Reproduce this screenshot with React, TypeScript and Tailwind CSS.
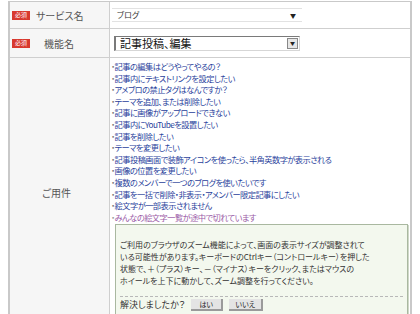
import React from "react";

const links = [
  "記事の編集はどうやってやるの？",
  "記事内にテキストリンクを設定したい",
  "アメブロの禁止タグはなんですか？",
  "テーマを追加、または削除したい",
  "記事に画像がアップロードできない",
  "記事内にYouTubeを設置したい",
  "記事を削除したい",
  "テーマを変更したい",
  "記事投稿画面で装飾アイコンを使ったら、半角英数字が表示される",
  "画像の位置を変更したい",
  "複数のメンバーで一つのブログを使いたいです",
  "記事を一括で削除・非表示・アメンバー限定記事にしたい",
  "絵文字が一部表示されません",
];

function Badge() {
  return (
    <span className="inline-flex h-[9px] w-[18px] items-center justify-center bg-[#d8382e] text-[6px] leading-none text-white">
      必須
    </span>
  );
}

export default function App() {
  const font = { fontFamily: '"Noto Sans CJK JP", "Noto Sans", sans-serif', fontFeatureSettings: '"palt"' } as React.CSSProperties;
  return (
    <div className="h-[314px] w-[420px] overflow-hidden bg-white pl-[8px] pt-[1px]" style={font}>
      <div className="grid w-[404px] grid-cols-[100px_1fr] border-x-2 border-t border-[#c9c9c9]">
        {/* row 1 */}
        <div className="flex h-[27px] items-center gap-[6px] border-b border-r border-[#cfcfcf] bg-[#f6f6f6] pl-[2px] text-[10px] text-[#555]">
          <Badge />
          <span>サービス名</span>
        </div>
        <div className="flex h-[27px] items-center border-b border-[#cfcfcf] pl-[2px]">
          <div className="flex h-[14px] w-[190px] items-center justify-between border-y border-[#e2e2e2] pl-[5px] pr-[6px]">
            <span className="text-[8px] text-[#333]">ブログ</span>
            <span className="text-[6px] text-[#222]">▼</span>
          </div>
        </div>
        {/* row 2 */}
        <div className="flex h-[29px] items-center border-b border-r border-[#cfcfcf] bg-[#f6f6f6] pl-[2px] text-[10px] text-[#555]">
          <Badge />
          <span className="ml-[14px]">機能名</span>
        </div>
        <div className="flex h-[29px] items-center border-b border-[#cfcfcf] pl-[4px]">
          <div className="flex h-[15px] w-[186px] items-center justify-between border-l-2 border-t border-[#7a7a7a] border-b-[#d6d6d6] border-r-[#d6d6d6] border-b border-r pl-[4px] pr-[1px]">
            <span className="text-[11px] leading-none text-[#111]">記事投稿、編集</span>
            <span className="flex h-[11px] w-[11px] items-center justify-center border border-[#888] bg-[#e6e6e6] text-[5px] text-[#222]">▼</span>
          </div>
        </div>
        {/* row 3 */}
        <div className="flex items-center justify-center border-r border-[#cfcfcf] bg-[#f6f6f6] pr-[6px] text-[10px] text-[#555]">
          ご用件
        </div>
        <div className="flex flex-col pb-[8px] pl-[1px] pr-[1px] pt-[3px]">
          <ul className="text-[8.2px] leading-[11.6px] tracking-[-0.5px] text-[#2a3f9c]">
            {links.map((l) => (
              <li key={l} className="whitespace-nowrap">
                <span className="text-[#777]">・</span>
                {l}
              </li>
            ))}
            <li className="whitespace-nowrap text-[#9a5aa6]">
              <span className="text-[#999]">・</span>
              みんなの絵文字一覧が途中で切れています
            </li>
          </ul>
          <div className="ml-[4px] mr-[1px] mt-[1px] border border-[#a9b8a0] bg-[#f3f8ee] pb-[6px] pl-[4px] pr-[4px] pt-[14px] shadow-[1px_1px_0_#cfd8c8]">
            <p className="text-[8px] leading-[12px] text-[#333]">
              ご利用のブラウザのズーム機能によって、画面の表示サイズが調整されて
              <br />
              いる可能性があります。キーボードのCtrlキー（コントロールキー）を押した
              <br />
              状態で、＋（プラス）キー、－（マイナス）キーをクリック、またはマウスの
              <br />
              ホイールを上下に動かして、ズーム調整を行ってください。
            </p>
            <div className="mt-[9px] border-t border-dashed border-[#b8b8b8] pt-[2px]">
              <div className="flex items-center gap-[6px] text-[9px] leading-[12px] text-[#333]">
                <span>解決しましたか？</span>
                <span className="flex h-[12px] w-[32px] items-center justify-center border-b-2 border-r-2 border-[#9a9a9a] bg-[#e4e4e4] text-[7px] text-[#222]">はい</span>
                <span className="flex h-[12px] w-[34px] items-center justify-center border-b-2 border-r-2 border-[#9a9a9a] bg-[#e4e4e4] text-[7px] text-[#222]">いいえ</span>
              </div>
            </div>
          </div>
        </div>
      </div>
    </div>
  );
}
